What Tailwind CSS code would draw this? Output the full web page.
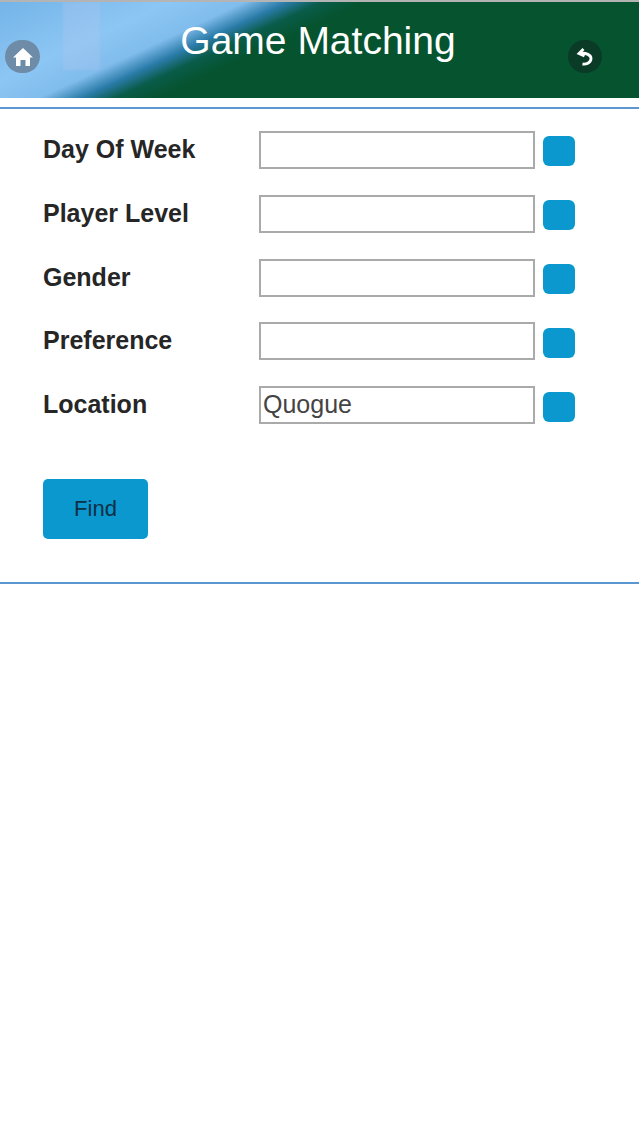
<!DOCTYPE html>
<html lang="en">
<head>
    <meta charset="UTF-8">
    <meta name="viewport" content="width=device-width, initial-scale=1.0">
    <script src="https://cdn.jsdelivr.net/npm/@tailwindcss/browser@4"></script>
    <title>Game Matching</title>
</head>
<body class="bg-white min-h-screen font-['Liberation_Sans',Arial,sans-serif]">
    <!-- Header -->
    <header class="relative h-[98px] border-t-2 border-[#b4b4b4] bg-[linear-gradient(155deg,#74b4e8_0%,#8cc6f4_20%,#80bcec_29%,#2a7ba8_34%,#0a5c4a_38%,#05532f_43%,#05532f_100%)] overflow-hidden">
        <div class="absolute left-[63px] top-0 w-[37px] h-[68px] bg-[#b4c8f0]/30 blur-[1px]"></div>
        <h1 class="text-center text-white text-[39px] leading-[44px] pt-[17px] pr-[3px]">Game Matching</h1>
        <div class="absolute left-[5px] top-[38px] w-[35px] h-[33px] rounded-full bg-[#6e8ca8] flex items-center justify-center">
            <svg width="22" height="20" viewBox="0 0 22 20"><path fill="#fff" d="M11 1 L21 10.5 L18 10.5 L18 19 L13.5 19 L13.5 13 L8.5 13 L8.5 19 L4 19 L4 10.5 L1 10.5 Z"/></svg>
        </div>
        <div class="absolute left-[568px] top-[38px] w-[34px] h-[33px] rounded-full bg-[#0a3b26] flex items-center justify-center">
            <svg width="20" height="20" viewBox="0 0 20 20" fill="none" stroke="#fff" stroke-width="2.8"><path d="M8.5 2 L4 6.5 L9.5 9"/><path d="M5 6.5 C11 5.5 16.5 8 16 12 C15.5 16 11 17.5 7.5 17"/></svg>
        </div>
    </header>

    <!-- Form -->
    <main class="mt-[9px] border-y-2 border-[#5a96d0] h-[477px] pt-[22px] pl-[43px]">
        <div class="flex flex-col gap-[25.75px]">
            <div class="flex items-start h-[38px]">
                <label class="w-[216px] pt-[1px] text-[25px] leading-[34px] font-bold text-[#262626]">Day Of Week</label>
                <input type="text" class="w-[276px] h-[38px] border-2 border-[#aaaaaa] bg-white">
                <span class="ml-[8px] mt-[5px] w-[32px] h-[30px] rounded-[6px] bg-[#0a98cf]"></span>
            </div>
            <div class="flex items-start h-[38px]">
                <label class="w-[216px] pt-[1px] text-[25px] leading-[34px] font-bold text-[#262626]">Player Level</label>
                <input type="text" class="w-[276px] h-[38px] border-2 border-[#aaaaaa] bg-white">
                <span class="ml-[8px] mt-[5.5px] w-[32px] h-[30px] rounded-[6px] bg-[#0a98cf]"></span>
            </div>
            <div class="flex items-start h-[38px]">
                <label class="w-[216px] pt-[1px] text-[25px] leading-[34px] font-bold text-[#262626]">Gender</label>
                <input type="text" class="w-[276px] h-[38px] border-2 border-[#aaaaaa] bg-white">
                <span class="ml-[8px] mt-[5.5px] w-[32px] h-[30px] rounded-[6px] bg-[#0a98cf]"></span>
            </div>
            <div class="flex items-start h-[38px]">
                <label class="w-[216px] pt-[1px] text-[25px] leading-[34px] font-bold text-[#262626]">Preference</label>
                <input type="text" class="w-[276px] h-[38px] border-2 border-[#aaaaaa] bg-white">
                <span class="ml-[8px] mt-[5.5px] w-[32px] h-[30px] rounded-[6px] bg-[#0a98cf]"></span>
            </div>
            <div class="flex items-start h-[38px]">
                <label class="w-[216px] pt-[1px] text-[25px] leading-[34px] font-bold text-[#262626]">Location</label>
                <input type="text" value="Quogue" class="w-[276px] h-[38px] border-2 border-[#aaaaaa] bg-white px-[2px] pb-[2px] text-[25px] text-[#444444]">
                <span class="ml-[8px] mt-[5.5px] w-[32px] h-[30px] rounded-[6px] bg-[#0a98cf]"></span>
            </div>
        </div>
        <button class="mt-[55px] w-[105px] h-[60px] pb-[2px] rounded-[5px] bg-[#0a98cf] text-[22px] text-[#0f2f45]">Find</button>
    </main>
</body>
</html>
